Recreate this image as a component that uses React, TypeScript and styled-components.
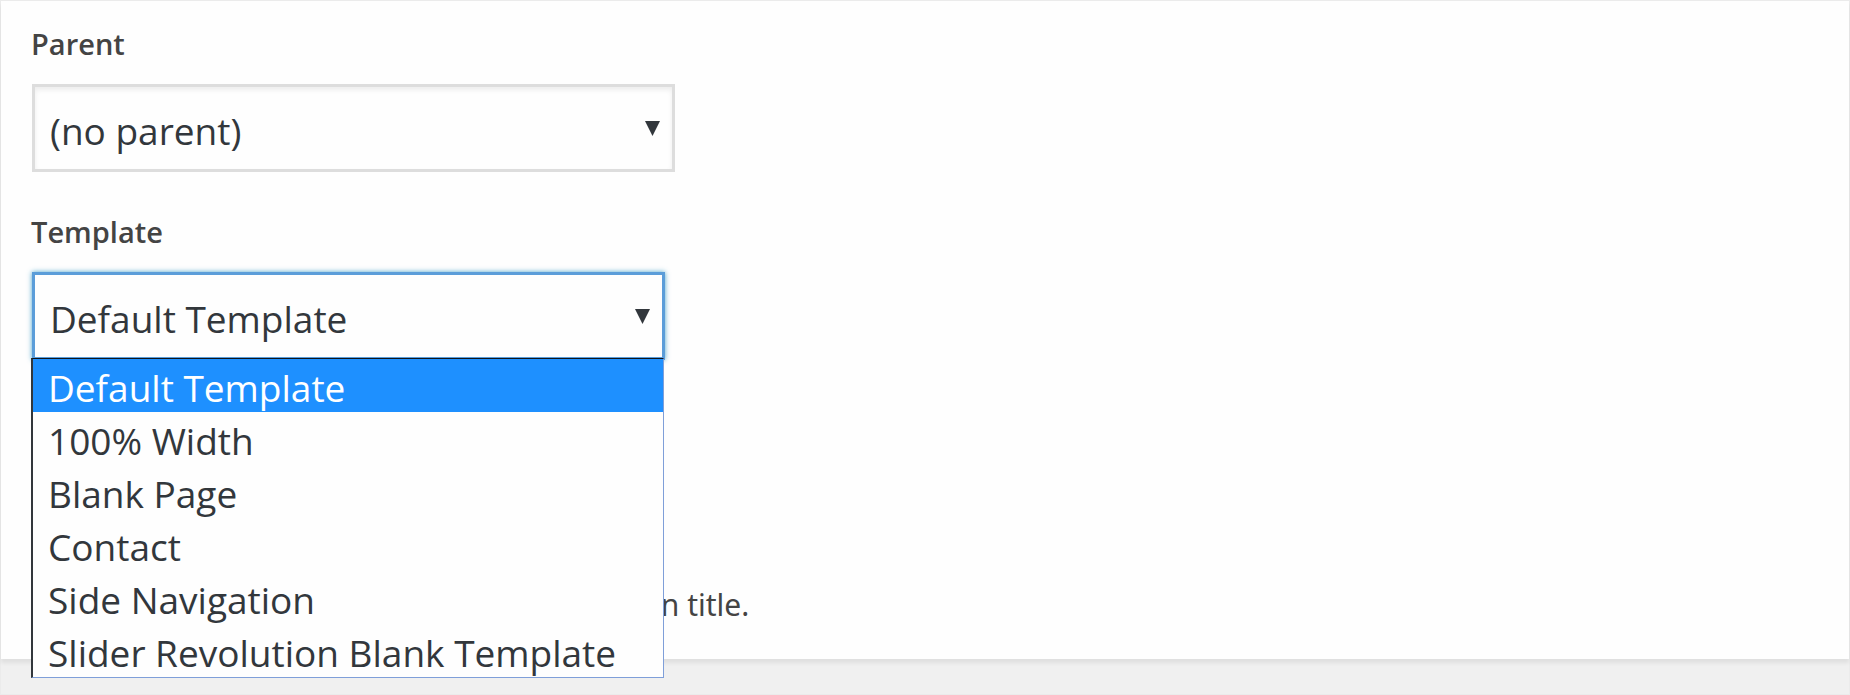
import { useState } from "react";
import styled, { createGlobalStyle, css } from "styled-components";

const GlobalStyle = createGlobalStyle`
  * {
    box-sizing: border-box;
  }
  body {
    margin: 0;
    background-color: #f0f0f0;
    color: #444;
    font-family: "Segoe UI", "Open Sans", "Noto Sans", sans-serif;
  }
`;

const Wrapper = styled.main`
  min-height: 100vh;
  border: 1px solid #ebebeb;
`;

const Panel = styled.section`
  display: flex;
  flex-direction: column;
  align-items: flex-start;
  padding: 19px 30px 30px;
  background-color: #fefefe;
  box-shadow: 0 4px 4px rgba(0, 0, 0, 0.07);
`;

const Label = styled.label`
  margin-bottom: 16px;
  font-size: 29px;
  font-weight: 600;
  line-height: 48px;
`;

const Field = styled.div<{ $width: number }>`
  position: relative;
  width: ${({ $width }) => $width}px;
  max-width: 100%;
  margin: 0 0 36px 1px;
`;

const Select = styled.select<{ $open?: boolean }>`
  display: block;
  appearance: none;
  width: 100%;
  height: 88px;
  margin: 0;
  padding: 4px 50px 0 15px;
  border: 3px solid #ddd;
  border-radius: 0;
  outline: none;
  background-color: #fefefe;
  box-shadow: inset 0 3px 5px rgba(0, 0, 0, 0.07);
  color: #32373c;
  font-family: inherit;
  font-size: 37px;
  ${({ $open }) =>
    $open &&
    css`
      border-color: #5b9dd9;
      box-shadow: 0 0 5px rgba(30, 140, 190, 0.8);
    `}
`;

const Arrow = styled.svg`
  position: absolute;
  top: 37px;
  right: 15px;
  width: 15px;
  height: 15px;
  fill: #32373c;
  pointer-events: none;
`;

const Options = styled.ul`
  position: absolute;
  top: 86px;
  left: -1px;
  z-index: 1;
  width: 100%;
  margin: 0;
  padding: 0;
  border: 1px solid #7f9fd9;
  border-top-color: #10151c;
  border-left: 2px solid #32373c;
  background-color: #fefefe;
  list-style: none;
`;

const Option = styled.li<{ $active: boolean }>`
  padding: 4px 15px 0;
  background-color: ${({ $active }) => ($active ? "#1e90ff" : "transparent")};
  color: ${({ $active }) => ($active ? "#fff" : "#32373c")};
  font-size: 37px;
  line-height: 49px;
  white-space: nowrap;
  cursor: default;
`;

const Help = styled.p`
  margin: 185px 0 0 1px;
  font-family: "Noto Sans", sans-serif;
  font-size: 30px;
  line-height: 48px;
`;

const templates = [
  "Default Template",
  "100% Width",
  "Blank Page",
  "Contact",
  "Side Navigation",
  "Slider Revolution Blank Template",
];

const ArrowDown = () => (
  <Arrow viewBox="0 0 15 15" aria-hidden="true">
    <path d="M0 0h15L7.5 15z" />
  </Arrow>
);

const App = () => {
  const [template, setTemplate] = useState(templates[0]);
  const [open, setOpen] = useState(true);

  const choose = (name: string) => {
    setTemplate(name);
    setOpen(false);
  };

  return (
    <Wrapper>
      <GlobalStyle />
      <Panel>
        <Label htmlFor="parent">Parent</Label>
        <Field $width={643}>
          <Select id="parent">
            <option>(no parent)</option>
          </Select>
          <ArrowDown />
        </Field>
        <Label htmlFor="template">Template</Label>
        <Field $width={633}>
          <Select
            id="template"
            $open={open}
            value={template}
            onChange={(e) => choose(e.target.value)}
            onMouseDown={(e) => {
              e.preventDefault();
              setOpen(!open);
            }}
          >
            {templates.map((name) => (
              <option key={name}>{name}</option>
            ))}
          </Select>
          <ArrowDown />
          {open && (
            <Options role="listbox" aria-label="Template">
              {templates.map((name) => (
                <Option
                  key={name}
                  role="option"
                  aria-selected={name === template}
                  $active={name === template}
                  onClick={() => choose(name)}
                >
                  {name}
                </Option>
              ))}
            </Options>
          )}
        </Field>
        <Help>Need help? Use the Help tab above the screen title.</Help>
      </Panel>
    </Wrapper>
  );
};

export default App;
